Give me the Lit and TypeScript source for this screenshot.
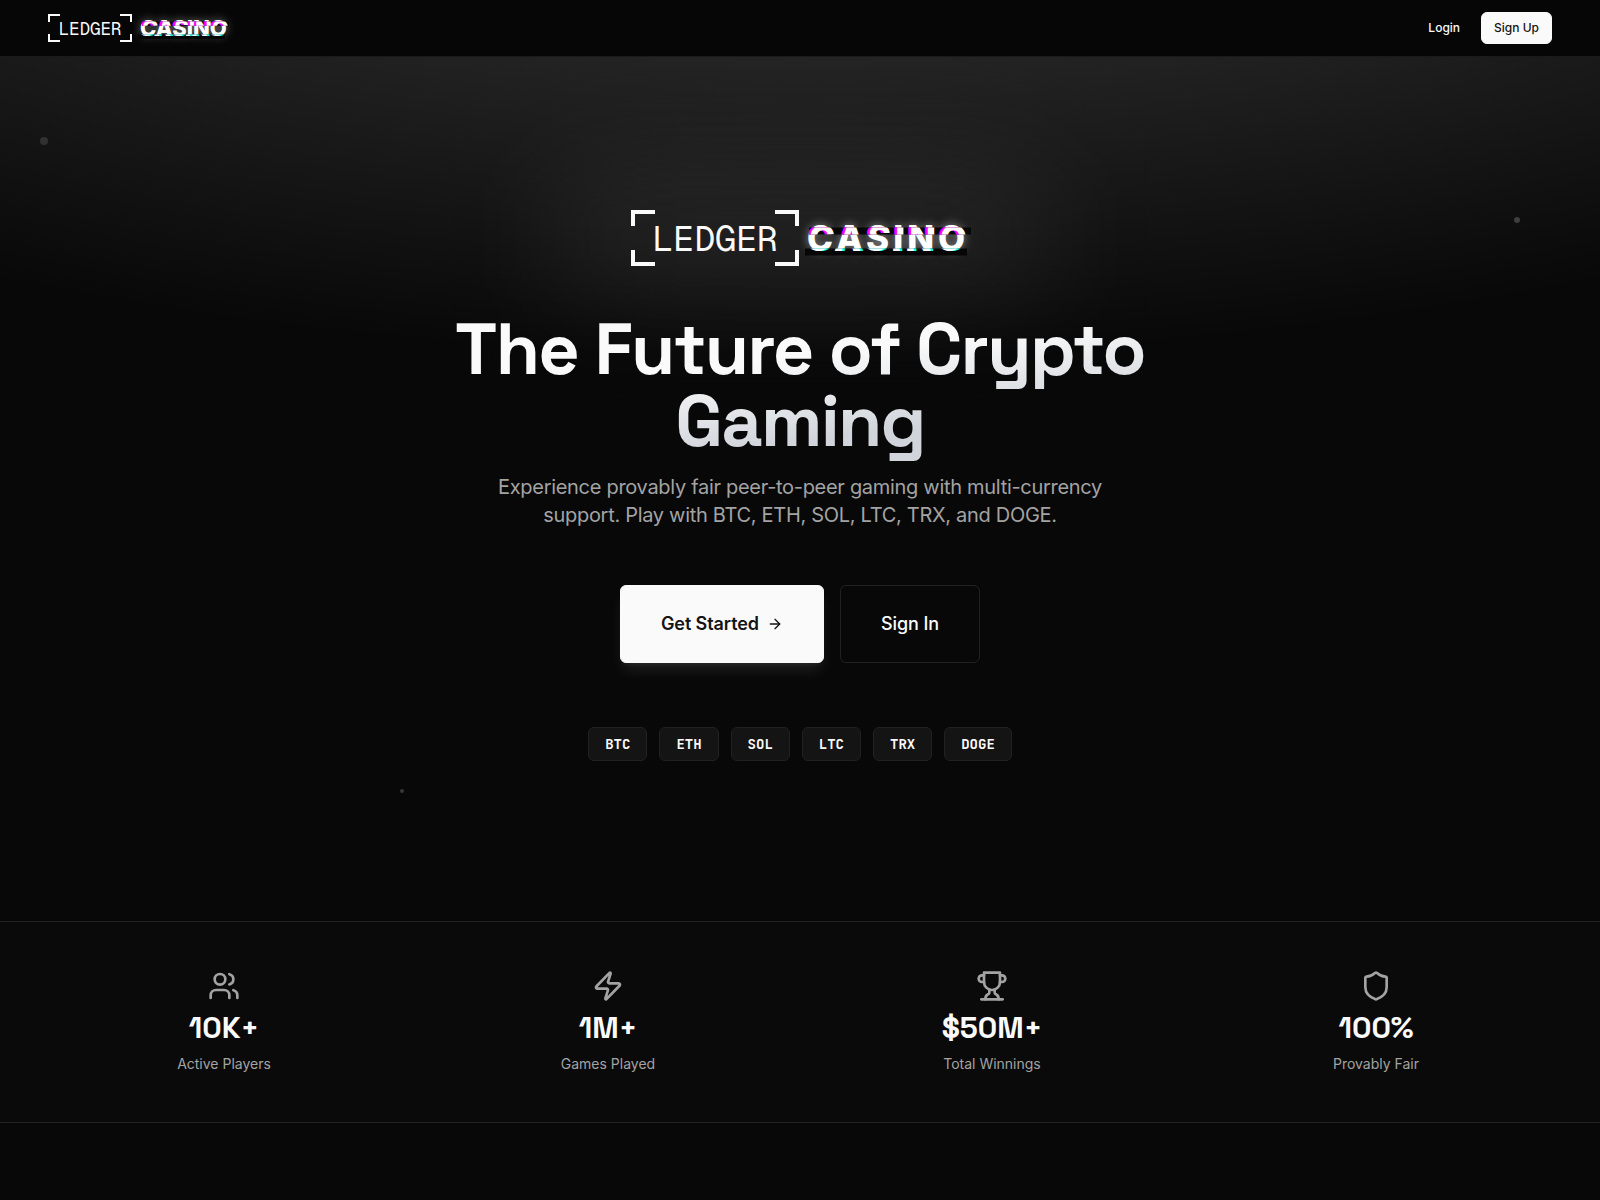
import { LitElement, html, svg, css, type TemplateResult } from "lit";
import { customElement, property } from "lit/decorators.js";

@customElement("brand-logo")
export class BrandLogo extends LitElement {
  @property({ reflect: true }) size: "small" | "large" = "small";

  static styles = css`
    :host {
      display: inline-flex;
      align-items: center;
      gap: 8px;
    }
    .frame {
      display: block;
      width: 84px;
      height: 28px;
    }
    :host([size="large"]) .frame {
      width: 168px;
      height: 56px;
    }
    .corner {
      fill: none;
      stroke: #fafafa;
      stroke-width: 4;
    }
    .ledger {
      fill: #fafafa;
      font: 400 35px "Geist Mono", "Liberation Mono", monospace;
    }
    .casino {
      position: relative;
      color: #fff;
      font: 800 22px/1 Inter, "Liberation Sans", sans-serif;
      white-space: nowrap;
      text-shadow: 0 0 10px rgba(255, 255, 255, 0.5);
    }
    :host([size="large"]) .casino {
      font-size: 35px;
      letter-spacing: 4px;
    }
    .casino::before,
    .casino::after {
      content: attr(data-text);
      position: absolute;
      inset: 0;
      background: #060606;
    }
    .casino::before {
      left: 2px;
      right: -2px;
      text-shadow: -3px 0 #ff00ff;
      clip-path: inset(20% 0 60% 0);
    }
    .casino::after {
      left: -2px;
      right: 2px;
      text-shadow: 3px 0 #00ffff;
      clip-path: inset(80% 0 0 0);
    }
  `;

  render() {
    return html`
      <svg class="frame" viewBox="0 0 168 56" role="img" aria-label="LEDGER">
        <path class="corner" d="M2 16V2H24M144 2H166V16M166 40V54H144M24 54H2V40" />
        <text class="ledger" x="84" y="41" text-anchor="middle">LEDGER</text>
      </svg>
      <span class="casino" data-text="CASINO">CASINO</span>
    `;
  }
}

interface Stat {
  icon: TemplateResult;
  value: string;
  label: string;
}

const stats: Stat[] = [
  {
    icon: svg`<path d="M16 21v-2a4 4 0 0 0-4-4H6a4 4 0 0 0-4 4v2"/><circle cx="9" cy="7" r="4"/><path d="M22 21v-2a4 4 0 0 0-3-3.87"/><path d="M16 3.13a4 4 0 0 1 0 7.75"/>`,
    value: "10K+",
    label: "Active Players",
  },
  {
    icon: svg`<path d="M4 14a1 1 0 0 1-.78-1.63l9.9-10.2a.5.5 0 0 1 .86.46l-1.92 6.02A1 1 0 0 0 13 10h7a1 1 0 0 1 .78 1.63l-9.9 10.2a.5.5 0 0 1-.86-.46l1.92-6.02A1 1 0 0 0 11 14z"/>`,
    value: "1M+",
    label: "Games Played",
  },
  {
    icon: svg`<path d="M6 9H4.5a2.5 2.5 0 0 1 0-5H6"/><path d="M18 9h1.5a2.5 2.5 0 0 0 0-5H18"/><path d="M4 22h16"/><path d="M10 14.66V17c0 .55-.47.98-.97 1.21C7.85 18.75 7 20.24 7 22"/><path d="M14 14.66V17c0 .55.47.98.97 1.21C16.15 18.75 17 20.24 17 22"/><path d="M18 2H6v7a6 6 0 0 0 12 0V2Z"/>`,
    value: "$50M+",
    label: "Total Winnings",
  },
  {
    icon: svg`<path d="M20 13c0 5-3.5 7.5-7.66 8.95a1 1 0 0 1-.67-.01C7.5 20.5 4 18 4 13V6a1 1 0 0 1 1-1c2 0 4.5-1.2 6.24-2.72a1.17 1.17 0 0 1 1.52 0C14.51 3.81 17 5 19 5a1 1 0 0 1 1 1z"/>`,
    value: "100%",
    label: "Provably Fair",
  },
];

const currencies = ["BTC", "ETH", "SOL", "LTC", "TRX", "DOGE"];

@customElement("app-root")
export class AppRoot extends LitElement {
  static styles = css`
    :host {
      display: block;
      min-height: 100vh;
      background: #080808;
      color: #fafafa;
      font-family: Inter, "Liberation Sans", sans-serif;
    }
    * {
      box-sizing: border-box;
    }
    h1,
    p,
    ul {
      margin: 0;
      padding: 0;
    }
    .header {
      display: flex;
      align-items: center;
      justify-content: space-between;
      padding: 12px 48px;
      background: #060606;
      border-bottom: 1px solid #1a1a1a;
    }
    .home {
      display: flex;
      color: inherit;
      text-decoration: none;
    }
    .actions {
      display: flex;
      gap: 8px;
    }
    .button {
      display: inline-flex;
      align-items: center;
      justify-content: center;
      gap: 8px;
      border: 1px solid transparent;
      border-radius: 6px;
      background: transparent;
      color: #fafafa;
      font: 500 12px/16px Inter, "Liberation Sans", sans-serif;
      padding: 7px 12px;
      cursor: pointer;
    }
    .primary {
      background: #fafafa;
      border-color: #fafafa;
      color: #141414;
    }
    .big {
      padding: 24px 40px;
      font-size: 18px;
      line-height: 28px;
      letter-spacing: -0.005em;
    }
    .big.primary {
      font-weight: 600;
      box-shadow:
        0 10px 15px -3px rgba(250, 250, 250, 0.1),
        0 4px 6px -4px rgba(250, 250, 250, 0.1);
    }
    .outline {
      border-color: #212121;
    }
    .arrow {
      width: 16px;
      height: 16px;
    }
    .hero {
      position: relative;
      display: flex;
      flex-direction: column;
      align-items: center;
      overflow: hidden;
      padding: 153px 48px 160px;
      text-align: center;
      background: radial-gradient(
        ellipse 112% 85% at 50% -50%,
        rgba(250, 250, 250, 0.28),
        transparent
      );
    }
    .mark {
      position: relative;
      display: flex;
      margin-bottom: 47px;
    }
    .glow {
      position: absolute;
      inset: -14px -78px;
      background: rgba(250, 250, 250, 0.11);
      filter: blur(64px);
    }
    .mark brand-logo {
      position: relative;
    }
    .title {
      max-width: 896px;
      margin-bottom: 8px;
      padding-bottom: 8px;
      font: 700 72px/72px "Space Grotesk", Inter, sans-serif;
      letter-spacing: -0.025em;
      color: transparent;
      background: linear-gradient(173deg, #fafafa, #fafafa 38%, #d1d5db 70%);
      background-clip: text;
      -webkit-background-clip: text;
    }
    .lead {
      max-width: 672px;
      margin-bottom: 56px;
      color: #a3a3a3;
      font-size: 20px;
      line-height: 28px;
      letter-spacing: -0.015em;
    }
    .cta {
      display: flex;
      gap: 16px;
      margin-bottom: 64px;
    }
    .chips {
      display: flex;
      flex-wrap: wrap;
      justify-content: center;
      gap: 12px;
      list-style: none;
    }
    .chip {
      padding: 6px 16px;
      border: 1px solid #212121;
      border-radius: 6px;
      background: #141414;
      font: 700 14px/20px "JetBrains Mono", monospace;
    }
    .dot {
      position: absolute;
      border-radius: 50%;
      background: #fafafa;
    }
    .dot-a {
      top: 80px;
      left: 40px;
      width: 8px;
      height: 8px;
      opacity: 0.13;
    }
    .dot-b {
      top: 160px;
      right: 80px;
      width: 6px;
      height: 6px;
      opacity: 0.2;
    }
    .dot-c {
      bottom: 128px;
      left: 25%;
      width: 4px;
      height: 4px;
      opacity: 0.2;
    }
    .stats {
      display: grid;
      grid-template-columns: repeat(4, 1fr);
      gap: 32px;
      padding: 48px;
      border-top: 1px solid #212121;
      border-bottom: 1px solid #212121;
      background: #0a0a0a;
    }
    .stat {
      display: flex;
      flex-direction: column;
      align-items: center;
      gap: 8px;
    }
    .icon {
      width: 32px;
      height: 32px;
      color: #a3a3a3;
    }
    .icon,
    .arrow {
      display: block;
      fill: none;
      stroke: currentColor;
      stroke-width: 2;
      stroke-linecap: round;
      stroke-linejoin: round;
    }
    .value {
      font: 700 30px/36px "Space Grotesk", Inter, sans-serif;
    }
    .label {
      color: #a3a3a3;
      font-size: 14px;
      line-height: 20px;
    }
  `;

  render() {
    return html`
      <header class="header">
        <a class="home" href="#"><brand-logo></brand-logo></a>
        <nav class="actions">
          <button class="button" type="button">Login</button>
          <button class="button primary" type="button">Sign Up</button>
        </nav>
      </header>
      <main>
        <section class="hero">
          <span class="dot dot-a"></span>
          <span class="dot dot-b"></span>
          <span class="dot dot-c"></span>
          <div class="mark">
            <div class="glow"></div>
            <brand-logo size="large"></brand-logo>
          </div>
          <h1 class="title">The Future of Crypto Gaming</h1>
          <p class="lead">
            Experience provably fair peer-to-peer gaming with multi-currency support. Play with
            BTC, ETH, SOL, LTC, TRX, and DOGE.
          </p>
          <div class="cta">
            <button class="button primary big" type="button">
              Get Started
              <svg class="arrow" viewBox="0 0 24 24" aria-hidden="true">
                <path d="M5 12h14" />
                <path d="m12 5 7 7-7 7" />
              </svg>
            </button>
            <button class="button outline big" type="button">Sign In</button>
          </div>
          <ul class="chips">
            ${currencies.map((code) => html`<li class="chip">${code}</li>`)}
          </ul>
        </section>
        <section class="stats">
          ${stats.map(
            (stat) => html`
              <div class="stat">
                <svg class="icon" viewBox="0 0 24 24" aria-hidden="true">${stat.icon}</svg>
                <div class="value">${stat.value}</div>
                <div class="label">${stat.label}</div>
              </div>
            `,
          )}
        </section>
      </main>
    `;
  }
}
